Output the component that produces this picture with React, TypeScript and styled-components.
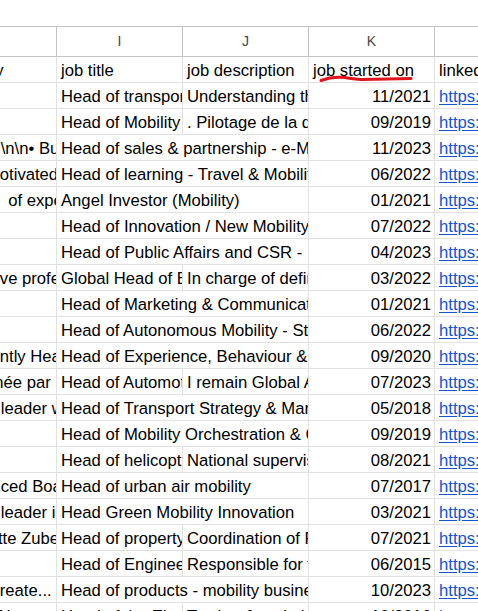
import React from "react";
import styled, { createGlobalStyle } from "styled-components";

const GlobalStyle = createGlobalStyle`
  html, body {
    margin: 0;
    padding: 0;
    background: #ffffff;
  }
  body {
    font-family: "Liberation Sans", Arial, sans-serif;
    overflow: hidden;
  }
`;

const Page = styled.div`
  position: relative;
  width: 478px;
  height: 611px;
  overflow: hidden;
  background: #ffffff;
`;

const TopGap = styled.div`
  height: 26px;
`;

const Sheet = styled.div`
  display: flex;
  flex-direction: column;
  margin-left: -69px;
`;

const HeaderRow = styled.div`
  display: grid;
  grid-template-columns: repeat(5, 126px);
  height: 31px;
  box-sizing: border-box;
  border-top: 1px solid #c4c4c4;
  border-bottom: 1px solid #c4c4c4;
`;

const ColumnLetter = styled.div`
  box-sizing: border-box;
  border-right: 1px solid #c4c4c4;
  text-align: center;
  font-size: 14px;
  line-height: 29px;
  color: #474747;
`;

const Row = styled.div`
  display: grid;
  grid-template-columns: repeat(5, 126px);
  height: 26px;
  box-sizing: border-box;
  border-bottom: 1px solid #e2e2e2;
`;

const Cell = styled.div<{ $span?: number; $align?: "left" | "right" }>`
  grid-column: span ${(p) => p.$span ?? 1};
  box-sizing: border-box;
  height: 25px;
  border-right: 1px solid #e2e2e2;
  padding: 0 3px 0 4px;
  overflow: hidden;
  white-space: nowrap;
  font-size: 16.67px;
  line-height: 27px;
  color: #000000;
  text-align: ${(p) => p.$align ?? "left"};
`;

const LinkText = styled.span`
  color: #1155cc;
  text-decoration: underline;
  text-underline-offset: 2px;
`;

const Annotation = styled.svg`
  position: absolute;
  left: 0;
  top: 0;
  width: 478px;
  height: 611px;
  pointer-events: none;
`;

type Entry = {
  h: string;
  i: string;
  j?: string;
  k: string;
  l: string;
  link?: boolean;
  dateAlign?: boolean;
};

const URL = "https://www.linkedin.com/in/";

const rows: Entry[] = [
  { h: "summary", i: "job title", j: "job description", k: "job started on", l: "linkedin profile" },
  { h: "", i: "Head of transport planning", j: "Understanding the needs of cities", k: "11/2021", l: URL, link: true, dateAlign: true },
  { h: "", i: "Head of Mobility", j: ". Pilotage de la direction", k: "09/2019", l: URL, link: true, dateAlign: true },
  { h: "partners.\\n\\n• Business development", i: "Head of sales & partnership - e-Mobility", k: "11/2023", l: URL, link: true, dateAlign: true },
  { h: "Highly motivated leader", i: "Head of learning - Travel & Mobility", k: "06/2022", l: URL, link: true, dateAlign: true },
  { h: "15 years\u00a0 of experience", i: "Angel Investor (Mobility)", k: "01/2021", l: URL, link: true, dateAlign: true },
  { h: "", i: "Head of Innovation / New Mobility", k: "07/2022", l: URL, link: true, dateAlign: true },
  { h: "", i: "Head of Public Affairs and CSR -", k: "04/2023", l: URL, link: true, dateAlign: true },
  { h: "A proactive professional", i: "Global Head of Business Development", j: "In charge of defining strategy", k: "03/2022", l: URL, link: true, dateAlign: true },
  { h: "", i: "Head of Marketing & Communications", k: "01/2021", l: URL, link: true, dateAlign: true },
  { h: "", i: "Head of Autonomous Mobility - Strategy", k: "06/2022", l: URL, link: true, dateAlign: true },
  { h: "I’m currently Head of", i: "Head of Experience, Behaviour & Design", k: "09/2020", l: URL, link: true, dateAlign: true },
  { h: "Passionnée par la mobilité", i: "Head of Automotive", j: "I remain Global Automotive lead", k: "07/2023", l: URL, link: true, dateAlign: true },
  { h: "Thought leader with", i: "Head of Transport Strategy & Market Analysis", k: "05/2018", l: URL, link: true, dateAlign: true },
  { h: "", i: "Head of Mobility Orchestration & Connectivity", k: "09/2019", l: URL, link: true, dateAlign: true },
  { h: "", i: "Head of helicopter operations", j: "National supervision of", k: "08/2021", l: URL, link: true, dateAlign: true },
  { h: "Experienced Board member", i: "Head of urban air mobility", k: "07/2017", l: URL, link: true, dateAlign: true },
  { h: "Thought leader in mobility", i: "Head Green Mobility Innovation", k: "03/2021", l: URL, link: true, dateAlign: true },
  { h: "Bernadette Zuber", i: "Head of property management", j: "Coordination of Facility", k: "07/2021", l: URL, link: true, dateAlign: true },
  { h: "", i: "Head of Engineering", j: "Responsible for the design", k: "06/2015", l: URL, link: true, dateAlign: true },
  { h: "Aim: to create...", i: "Head of products - mobility business", k: "10/2023", l: URL, link: true, dateAlign: true },
  { h: "Provide AI", i: "Head of the Electric Vehicles", j: "Testing & optimisation", k: "10/2016", l: URL, link: true, dateAlign: true },
];

const letters = ["H", "I", "J", "K", "L"];

export default function App() {
  return (
    <Page>
      <GlobalStyle />
      <TopGap />
      <Sheet>
        <HeaderRow>
          {letters.map((c) => (
            <ColumnLetter key={c}>{c}</ColumnLetter>
          ))}
        </HeaderRow>
        {rows.map((r, idx) => (
          <Row key={idx}>
            <Cell>{r.h}</Cell>
            {r.j === undefined ? (
              <Cell $span={2}>{r.i}</Cell>
            ) : (
              <>
                <Cell>{r.i}</Cell>
                <Cell>{r.j}</Cell>
              </>
            )}
            <Cell $align={r.dateAlign ? "right" : "left"}>{r.k}</Cell>
            <Cell>{r.link ? <LinkText>{r.l}</LinkText> : r.l}</Cell>
          </Row>
        ))}
      </Sheet>
      <Annotation viewBox="0 0 478 611">
        <path
          d="M321 80.5 C 326 78.5, 333 76.8, 341 77.2 S 352 79.6, 362 79.4 L 411 78.6"
          fill="none"
          stroke="#e0141a"
          strokeWidth="3"
          strokeLinecap="round"
          strokeLinejoin="round"
        />
      </Annotation>
    </Page>
  );
}
